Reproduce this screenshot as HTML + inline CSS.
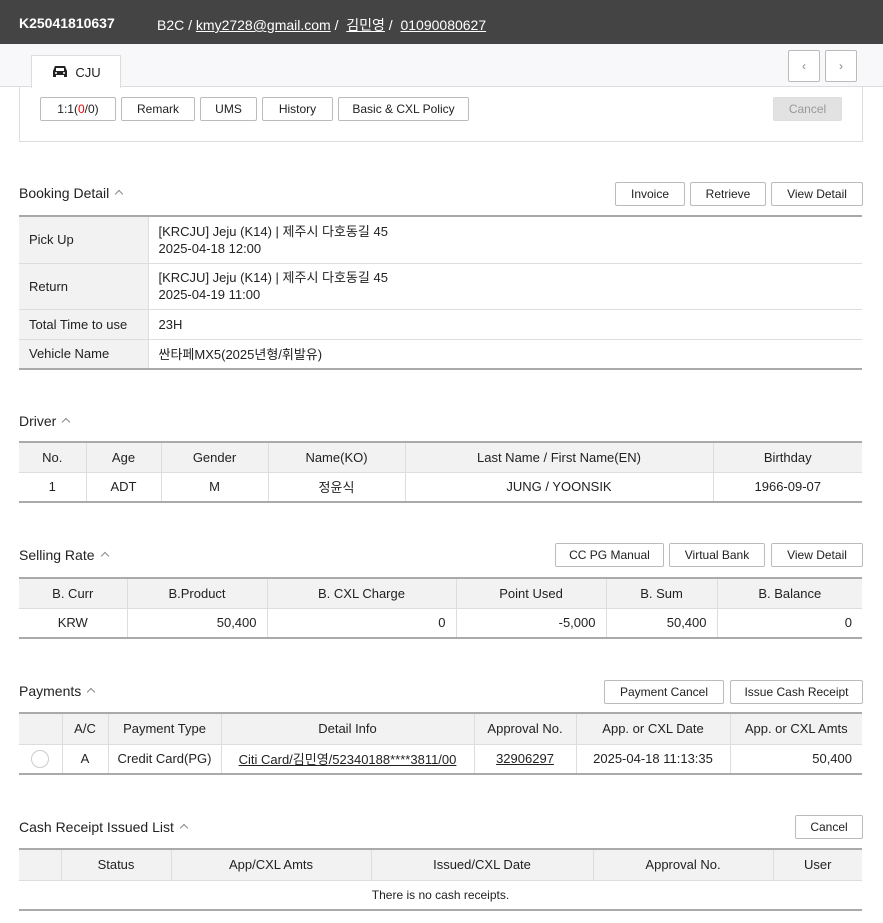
<!DOCTYPE html>
<html><head><meta charset="utf-8"><style>
*{box-sizing:border-box;margin:0;padding:0}
body{width:883px;height:923px;background:#fff;font-family:"Liberation Sans","Noto Sans CJK KR",sans-serif;font-size:13px;color:#222;position:relative;overflow:hidden}
.a{position:absolute}
.hdr{left:0;top:0;width:883px;height:44px;background:#444;color:#fff;font-size:14px}
.hdr u{text-decoration:underline}
.btn{position:absolute;height:24px;border:1px solid #bbb;border-radius:2px;background:#fff;font-size:12px;display:flex;align-items:center;justify-content:center;color:#222}
.ttl{position:absolute;left:19px;font-size:14px;color:#222}
.ttl:after{content:"";display:inline-block;width:5px;height:5px;border-left:1.5px solid #888;border-top:1.5px solid #888;transform:rotate(45deg);margin-left:7px;vertical-align:1px}
table{position:absolute;left:19px;width:843px;border-collapse:collapse;font-size:13px}
table{border-top:2px solid #aaa;border-bottom:2px solid #aaa}
th{background:#f2f2f2;font-weight:normal;border-left:1px solid #ddd;text-align:center}
td{border-left:1px solid #ddd;border-top:1px solid #ddd;text-align:center}
th:first-child,td:first-child{border-left:none}
.bd td{text-align:left;padding-left:10px}
.bd td.l{background:#f2f2f2}
.r{text-align:right!important;padding-right:10px}
</style></head><body>
<div class="a hdr"><span class="a" style="left:19px;top:15px;font-weight:bold">K25041810637</span><span class="a" style="left:157px;top:15px">B2C / <u>kmy2728@gmail.com</u> / &nbsp;<u>김민영</u> / &nbsp;<u>01090080627</u></span></div>
<div class="a" style="left:0;top:44px;width:883px;height:43px;background:#f8f8fa;border-bottom:1px solid #ddd"></div>
<div class="a" style="left:31px;top:55px;width:90px;height:33px;background:#fff;border:1px solid #ddd;border-bottom:none;font-size:13px;display:flex;align-items:center;justify-content:center">
<svg width="18" height="14" viewBox="0 0 18 14" style="margin-right:6px"><path d="M4 1h10l2 5v6h-3v-2H5v2H2V6z" fill="#222"/><rect x="5" y="3" width="8" height="3" fill="#fff"/><circle cx="5" cy="8" r="1" fill="#fff"/><circle cx="13" cy="8" r="1" fill="#fff"/></svg>CJU</div>
<div class="btn" style="left:788px;top:50px;width:32px;height:32px;color:#888">‹</div>
<div class="btn" style="left:825px;top:50px;width:32px;height:32px;color:#888">›</div>
<div class="a" style="left:19px;top:87px;width:844px;height:55px;border:1px solid #ddd;border-top:none"></div>
<div class="btn" style="left:40px;top:97px;width:76px">1:1(<span style="color:#e00">0</span>/0)</div>
<div class="btn" style="left:121px;top:97px;width:74px">Remark</div>
<div class="btn" style="left:200px;top:97px;width:57px">UMS</div>
<div class="btn" style="left:262px;top:97px;width:71px">History</div>
<div class="btn" style="left:338px;top:97px;width:131px">Basic &amp; CXL Policy</div>
<div class="btn" style="left:773px;top:97px;width:69px;background:#e2e2e2;border-color:#ddd;color:#999">Cancel</div>

<div class="ttl" style="top:185px">Booking Detail</div>
<div class="btn" style="left:615px;top:182px;width:70px">Invoice</div>
<div class="btn" style="left:690px;top:182px;width:76px">Retrieve</div>
<div class="btn" style="left:771px;top:182px;width:92px">View Detail</div>
<table class="bd" style="top:215px">
<tr style="height:47px"><td class="l" style="width:129px;border-top:none">Pick Up</td><td style="border-top:none;line-height:17px">[KRCJU] Jeju (K14) | 제주시 다호동길 45<br>2025-04-18 12:00</td></tr>
<tr style="height:46px"><td class="l">Return</td><td style="line-height:17px">[KRCJU] Jeju (K14) | 제주시 다호동길 45<br>2025-04-19 11:00</td></tr>
<tr style="height:30px"><td class="l">Total Time to use</td><td>23H</td></tr>
<tr style="height:30px"><td class="l">Vehicle Name</td><td>싼타페MX5(2025년형/휘발유)</td></tr>
</table>

<div class="ttl" style="top:413px">Driver</div>
<table style="top:441px">
<tr style="height:30px"><th style="width:67px">No.</th><th style="width:75px">Age</th><th style="width:107px">Gender</th><th style="width:137px">Name(KO)</th><th style="width:308px">Last Name / First Name(EN)</th><th>Birthday</th></tr>
<tr style="height:30px"><td>1</td><td>ADT</td><td>M</td><td>정윤식</td><td>JUNG / YOONSIK</td><td>1966-09-07</td></tr>
</table>

<div class="ttl" style="top:547px">Selling Rate</div>
<div class="btn" style="left:555px;top:543px;width:109px">CC PG Manual</div>
<div class="btn" style="left:669px;top:543px;width:96px">Virtual Bank</div>
<div class="btn" style="left:771px;top:543px;width:92px">View Detail</div>
<table style="top:577px">
<tr style="height:30px"><th style="width:108px">B. Curr</th><th style="width:140px">B.Product</th><th style="width:189px">B. CXL Charge</th><th style="width:150px">Point Used</th><th style="width:111px">B. Sum</th><th>B. Balance</th></tr>
<tr style="height:30px"><td>KRW</td><td class="r">50,400</td><td class="r">0</td><td class="r">-5,000</td><td class="r">50,400</td><td class="r">0</td></tr>
</table>

<div class="ttl" style="top:683px">Payments</div>
<div class="btn" style="left:604px;top:680px;width:120px">Payment Cancel</div>
<div class="btn" style="left:730px;top:680px;width:133px">Issue Cash Receipt</div>
<table style="top:712px">
<tr style="height:31px"><th style="width:43px"></th><th style="width:46px">A/C</th><th style="width:113px">Payment Type</th><th style="width:253px">Detail Info</th><th style="width:102px">Approval No.</th><th style="width:154px">App. or CXL Date</th><th>App. or CXL Amts</th></tr>
<tr style="height:30px"><td><span style="display:inline-block;width:18px;height:18px;border:1px solid #ccc;border-radius:50%;vertical-align:middle"></span></td><td>A</td><td>Credit Card(PG)</td><td><u>Citi Card/김민영/52340188****3811/00</u></td><td><u>32906297</u></td><td>2025-04-18 11:13:35</td><td class="r">50,400</td></tr>
</table>

<div class="ttl" style="top:819px">Cash Receipt Issued List</div>
<div class="btn" style="left:795px;top:815px;width:68px">Cancel</div>
<table style="top:848px">
<tr style="height:31px"><th style="width:42px"></th><th style="width:110px">Status</th><th style="width:200px">App/CXL Amts</th><th style="width:222px">Issued/CXL Date</th><th style="width:180px">Approval No.</th><th>User</th></tr>
<tr style="height:30px"><td colspan="6" style="font-size:12px">There is no cash receipts.</td></tr>
</table>
</body></html>
